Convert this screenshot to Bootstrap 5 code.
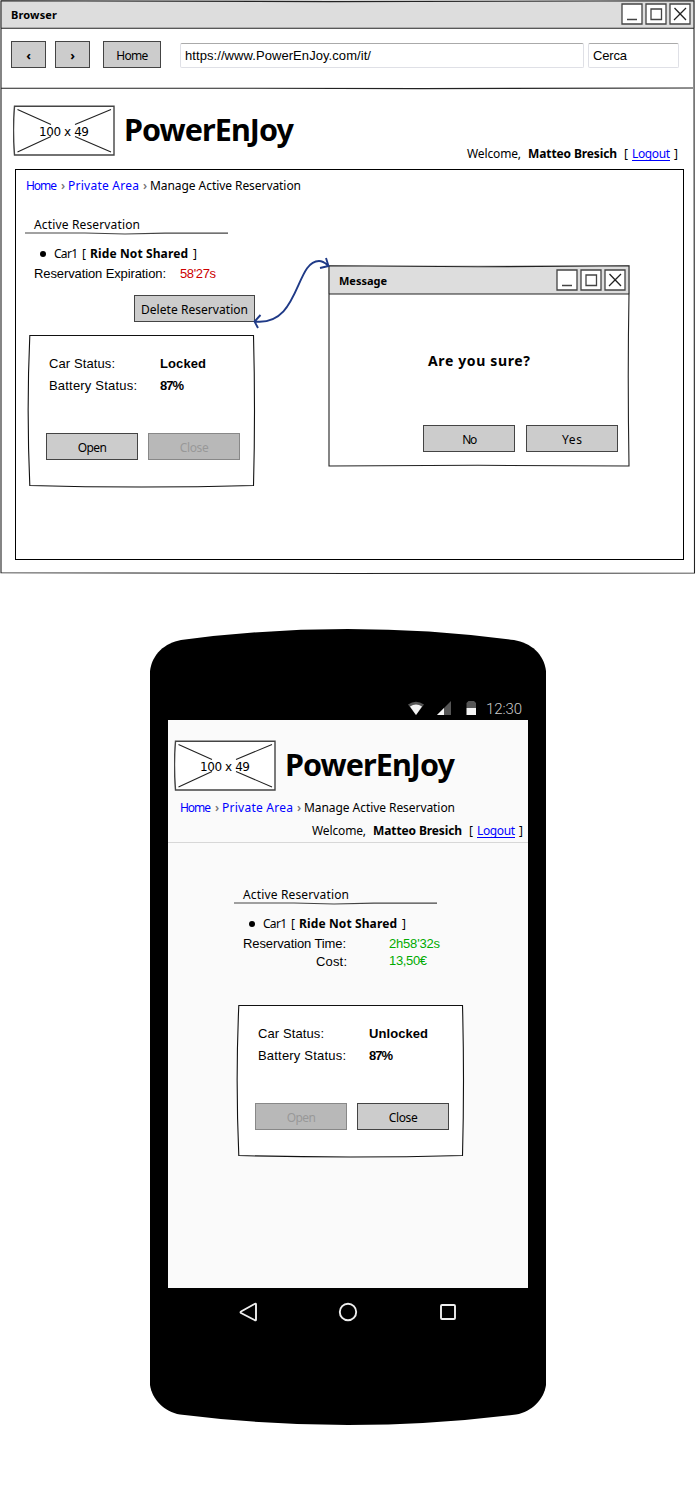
<!DOCTYPE html>
<html lang="en">
<head>
<meta charset="utf-8">
<title>PowerEnJoy - Manage Active Reservation</title>
<link href="https://cdn.jsdelivr.net/npm/bootstrap@5.3.0/dist/css/bootstrap.min.css" rel="stylesheet">
<style>
body{width:696px;height:1500px;background:#fff;color:#000;font:12px/16px "Comic Sans MS","Noto Sans","Open Sans",sans-serif;overflow-x:hidden}
.arial{font:13px/16px "Liberation Sans",Arial,sans-serif}
[data-w]{display:inline-block;white-space:nowrap}
b{font-weight:700}
a[href]{text-decoration:none;color:#00f}
a.out{line-height:13px;border-bottom:1px solid #00f}
.outline{position:absolute;left:0;top:0;overflow:visible;fill:none;stroke:#222;stroke-width:1.1;pointer-events:none}
symbol{overflow:visible}
.win{width:695px;height:574px}
.bar{height:28px;background:#ddd;padding:0 4px 0 11px}
.bar b{font-size:11px;margin-top:2px}
.tools{height:60px;padding:13px 0 0 11px}
.wbtn{height:27px;padding:2px 0 0;border:1px solid #444;border-radius:0;background:#ccc;color:#000;font:12px/16px "Comic Sans MS","Noto Sans","Open Sans",sans-serif;display:flex;align-items:center;justify-content:center}
.wbtn:disabled{background:#b8b8b8;border-color:#888;color:#989898;opacity:1}
.arrow{font:700 13px/16px "Noto Sans",sans-serif;padding-top:1px}
.w91{width:92px}
.field{height:25px;border:1px solid #dfe0e6;border-top-color:#aaa;border-radius:2px;padding:4px 4px;background:#fff}
.brand{height:50px}
.brand h1{font-size:30.5px;line-height:40px;font-weight:700;margin:-3px 0 0 9px}
.pic text{font:12px "DejaVu Sans",sans-serif;fill:#000;stroke:none}
.panel{margin-left:15px;width:669px;height:391px;border:1px solid #000;margin-top:4px}
.crumb{padding-left:10px;height:16px}
.sep{color:#777;font-weight:600}
.sect{padding-left:9px;width:203px;height:16px}
.dot{width:6px;height:6px;border-radius:50%;background:#000}
.status{width:226px;height:152px;padding:21px 0 0 20px}
.status .lab{width:111px}
.status .acts{margin:39px 0 0 -3px;gap:10px}
.dialog{left:312px;top:95px;width:302px;height:202px;background:#fff}
.dialog .bar{height:29px}
.phone{margin:55px 0 0 150px;width:396px;height:797px}
.statusbar{height:91px;padding:71px 24px 0 0;color:#ccc}
.statusbar span{font:300 15px/18px Roboto,sans-serif}
.screen{width:360px;height:568px;margin-left:18px;background:#fafafa}
.ruleline{border-bottom:1px solid #d7d7d7;height:123px;padding-top:20px}
</style>
</head>
<body>
<svg width="0" height="0" class="position-absolute">
 <defs>
  <symbol id="ctl" viewBox="0 0 70 22"><g fill="#fff" stroke="#444" stroke-width="1.3"><path d="M1 1h20v20H1zM25 1h20v20H25zM49 1h20v20H49z"/><path d="M6 16.500h10M30 6h10.500v10.500H30z"/><path d="M53.500 5l11.500 12M65 5L53 17" stroke="#222"/></g></symbol>
  <symbol id="frame" viewBox="0 0 102 51"><path d="M1.500 1.200Q-.5 25 1.500 50H101V1.200z" fill="#fff" stroke="#444" stroke-width="1.400"/><path d="M4.500 4.500L38 19.500M98 4.500L62 19.500M4.500 47L38 31.500M98 47L62 31.500" stroke="#222" stroke-width="1.100"/></symbol>
  <symbol id="cardline" viewBox="0 0 226 152"><path d="M.8 .5H224.500Q226.500 75 224.500 150.500Q112 153.500 .8 150.500Q-2.500 75 .8 .5z" fill="#fff" stroke="#111" stroke-width="1.100"/></symbol>
  <symbol id="hline" viewBox="0 0 203 3"><path d="M0 1H60L100 2L140 1.200H203" fill="none" stroke="#444" stroke-width="1.200"/></symbol>
 </defs>
</svg>

<section class="win position-relative">
 <header class="bar d-flex align-items-center justify-content-between">
  <b data-w="46">Browser</b>
  <svg width="70" height="22"><use href="#ctl"/></svg>
 </header>
 <nav class="tools d-flex align-items-start">
  <button class="wbtn arrow" style="width:35px">‹</button>
  <button class="wbtn arrow" style="width:35px;margin-left:9px">›</button>
  <button class="wbtn" style="width:58px;margin-left:13px"><span data-w="32">Home</span></button>
  <div class="field arial" style="width:404px;margin:2px 0 0 19px"><span data-w="186">https://www.PowerEnJoy.com/it/</span></div>
  <div class="field arial" style="width:91px;margin:2px 0 0 4px"><span data-w="34">Cerca</span></div>
 </nav>
 <div class="brand d-flex align-items-center" style="margin:17px 0 0 13px">
  <svg class="pic" width="102" height="51"><use href="#frame"/><text x="26" y="31" textLength="50">100 x 49</text></svg>
  <h1><span data-w="170">PowerEnJoy</span></h1>
 </div>
 <div class="d-flex justify-content-end" style="margin-top:-9px;padding-right:17px;height:19px">
  <span data-w="54">Welcome,</span><b data-w="89" style="margin-left:7px">Matteo Bresich</b><span style="margin-left:7px;width:8px">[</span><a href="#" class="out align-self-start" data-w="38" style="margin-top:1px">Logout</a><span style="margin-left:4px">]</span>
 </div>
 <main class="panel position-relative">
  <div class="crumb d-flex" style="margin-top:8px">
   <a href="#" data-w="31">Home</a><span class="sep" style="width:11px;padding-left:4px">›</span><a href="#" data-w="71">Private Area</a><span class="sep" style="width:11px;padding-left:4px">›</span><span data-w="151">Manage Active Reservation</span>
  </div>
  <div class="sect position-relative" style="margin:23px 0 0 9px"><span data-w="106">Active Reservation</span><svg class="outline" width="203" height="3" style="top:15px"><use href="#hline"/></svg></div>
  <div class="d-flex align-items-center" style="margin:13px 0 0 24px"><i class="dot"></i><span data-w="24" style="margin-left:8px">Car1</span><span style="margin-left:4px;width:8px">[</span><b data-w="98">Ride Not Shared</b><span style="margin-left:5px">]</span></div>
  <div class="d-flex arial" style="margin:4px 0 0 18px"><span data-w="132">Reservation Expiration:</span><span data-w="36" style="margin-left:14px;color:#c00">58'27s</span></div>
  <button class="wbtn" style="width:121px;margin:13px 0 0 118px"><span data-w="107">Delete Reservation</span></button>
  <div class="status position-relative" style="margin:13px 0 0 13px">
   <svg class="outline" width="226" height="152"><use href="#cardline"/></svg>
   <div class="position-relative arial">
    <div class="d-flex"><div class="lab"><span data-w="66">Car Status:</span></div><b data-w="46">Locked</b></div>
    <div class="d-flex" style="margin-top:6px"><div class="lab"><span data-w="88">Battery Status:</span></div><b data-w="24">87%</b></div>
    <div class="acts d-flex"><button class="wbtn w91"><span data-w="29">Open</span></button><button class="wbtn w91" disabled><span data-w="29">Close</span></button></div>
   </div>
  </div>
  <div class="dialog position-absolute">
   <div class="bar d-flex align-items-center justify-content-between"><b data-w="48">Message</b><svg width="70" height="22"><use href="#ctl"/></svg></div>
   <div style="margin:58px 0 0 100px;font-size:14px;line-height:18px"><b data-w="102">Are you sure?</b></div>
   <div class="d-flex" style="margin:55px 0 0 95px;gap:11px"><button class="wbtn w91"><span data-w="15">No</span></button><button class="wbtn w91"><span data-w="20">Yes</span></button></div>
   <svg class="outline" width="302" height="202"><path d="M1 .8L150 1.800L301 .8V29H1M301 29Q299.500 110 301 201L150 200.300L1 201V.8"/></svg>
  </div>
  <svg class="outline" width="90" height="80" style="left:234px;top:83px;stroke:#1f3a87;stroke-width:1.900"><path d="M4.500 68.500C50 74 45 8 69 8Q73 8 77.500 12M10.500 62L4.500 68.500L8 75M76 5L78.500 13L70 15"/></svg>
 </main>
 <svg class="outline" width="695" height="574"><path d="M.8 .8L330 1.600L694 .8V28.200H.8M694 28Q693 250 694.500 573L350 573.500L1 572.800V.8M1 88.200H200L420 88.600L693 88"/></svg>
</section>

<section class="phone position-relative">
 <svg class="outline" width="396" height="797" style="fill:#000;stroke:none"><path d="M0 42C2 25 15 14 31 11Q198 -11 364 11C381 14 394 25 396 42V756C394 770 382 783 366 785.500Q198 806.500 30 785.500C14 783 2 770 0 756z"/></svg>
 <div class="position-relative">
  <div class="statusbar d-flex justify-content-end">
   <svg width="72" height="18" style="margin-right:6px"><path d="M0 4.500Q8 -1 16 4.500L8 15z" fill="#555"/><path d="M2 6.500Q8 2.500 14 6.500L8 15z" fill="#f4f4f4"/><path d="M29 15L43 1V15z" fill="#555"/><path d="M29 15L36 8V15z" fill="#f4f4f4"/><path d="M58.500 8V3L60.500 1H66L68 3V8z" fill="#555"/><path d="M58.500 8H68V15H58.500z" fill="#f4f4f4"/></svg>
   <span data-w="36">12:30</span>
  </div>
  <div class="screen">
   <div class="ruleline">
    <div class="brand d-flex align-items-center" style="margin-left:6px">
     <svg class="pic" width="102" height="51"><use href="#frame"/><text x="26" y="31" textLength="50">100 x 49</text></svg>
     <h1><span data-w="170">PowerEnJoy</span></h1>
    </div>
    <div class="crumb d-flex" style="margin:10px 0 0 2px">
     <a href="#" data-w="31">Home</a><span class="sep" style="width:11px;padding-left:4px">›</span><a href="#" data-w="71">Private Area</a><span class="sep" style="width:11px;padding-left:4px">›</span><span data-w="151">Manage Active Reservation</span>
    </div>
    <div class="d-flex justify-content-end" style="margin-top:7px;padding-right:5px">
     <span data-w="54">Welcome,</span><b data-w="89" style="margin-left:7px">Matteo Bresich</b><span style="margin-left:7px;width:8px">[</span><a href="#" class="out align-self-start" data-w="38" style="margin-top:1px">Logout</a><span style="margin-left:4px">]</span>
    </div>
   </div>
   <div class="sect position-relative" style="margin:44px 0 0 66px"><span data-w="106">Active Reservation</span><svg class="outline" width="203" height="3" style="top:15px"><use href="#hline"/></svg></div>
   <div class="d-flex align-items-center" style="margin:13px 0 0 81px"><i class="dot"></i><span data-w="24" style="margin-left:8px">Car1</span><span style="margin-left:4px;width:8px">[</span><b data-w="98">Ride Not Shared</b><span style="margin-left:5px">]</span></div>
   <div class="arial" style="margin:4px 0 0 75px">
    <div class="d-flex"><span data-w="103">Reservation Time:</span><span data-w="51" style="margin-left:43px;color:#0a0">2h58'32s</span></div>
    <div class="d-flex" style="margin-top:2px"><span data-w="31" style="margin-left:73px">Cost:</span><span data-w="38" style="margin:-1px 0 0 42px;color:#0a0">13,50€</span></div>
   </div>
   <div class="status position-relative" style="margin:35px 0 0 70px">
    <svg class="outline" width="226" height="152"><use href="#cardline"/></svg>
    <div class="position-relative arial">
     <div class="d-flex"><div class="lab"><span data-w="66">Car Status:</span></div><b data-w="59">Unlocked</b></div>
     <div class="d-flex" style="margin-top:6px"><div class="lab"><span data-w="88">Battery Status:</span></div><b data-w="24">87%</b></div>
     <div class="acts d-flex"><button class="wbtn w91" disabled><span data-w="29">Open</span></button><button class="wbtn w91"><span data-w="29">Close</span></button></div>
    </div>
   </div>
  </div>
  <div class="d-flex justify-content-between" style="padding:14px 88px 0">
   <svg width="20" height="20" fill="none" stroke="#eee" stroke-width="1.900" stroke-linejoin="round"><path d="M18 2.500V17.500Q18 19 16.500 18L3 11Q2 10 3 9.500L16.500 2Q18 1 18 2.500z"/></svg>
   <svg width="20" height="20" fill="none" stroke="#eee" stroke-width="1.900"><circle cx="10" cy="10" r="8.200"/></svg>
   <svg width="20" height="20" fill="none" stroke="#eee" stroke-width="1.900"><rect x="3" y="3" width="14" height="14" rx="1"/></svg>
  </div>
 </div>
</section>
<script src="https://cdn.jsdelivr.net/npm/bootstrap@5.3.0/dist/js/bootstrap.bundle.min.js"></script>
<script>
// track each label to its set width
document.querySelectorAll('[data-w]').forEach(e=>{
 const s=(e.dataset.w-e.getBoundingClientRect().width)/(e.textContent.length-1);
 e.style.letterSpacing=s+'px';e.style.width=e.dataset.w+'px';e.style.flexShrink=0;
});
</script>
</body>
</html>
